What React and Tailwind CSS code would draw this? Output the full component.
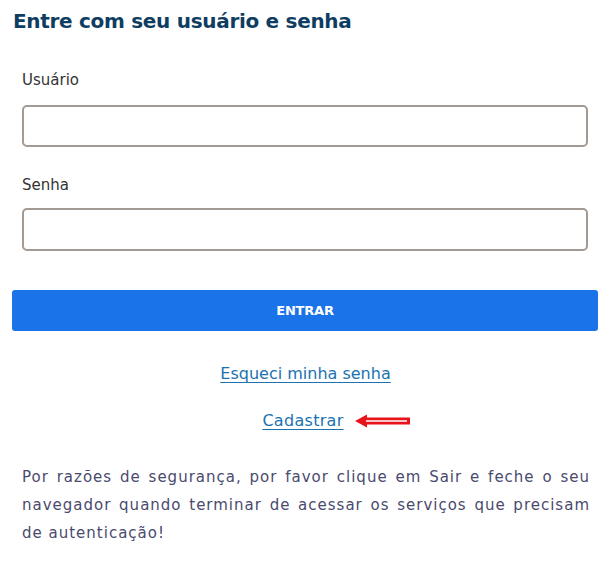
export default function App() {
  return (
    <div className="w-[604px] h-[565px] bg-white font-['DejaVu_Sans',sans-serif] relative">
      <div className="pt-[8px] pl-[13px] pr-[6px]">
        <h1 className="text-[20px] leading-[26px] font-bold text-[#0f3d62] tracking-[-0.3px]">
          Entre com seu usuário e senha
        </h1>

        <form className="mt-[36px]" onSubmit={(e) => e.preventDefault()}>
          <div className="pl-[9px] pr-[10px]">
            <label className="block text-[15px] leading-[20px] text-[#333]">Usuário</label>
            <input
              type="text"
              className="mt-[15px] block w-full h-[42px] rounded-[5px] border-2 border-[#a39b93] bg-white outline-none"
            />
            <label className="block mt-[28px] text-[15px] leading-[20px] text-[#333]">Senha</label>
            <input
              type="password"
              className="mt-[13px] block w-full h-[43px] rounded-[5px] border-2 border-[#a39b93] bg-white outline-none"
            />
          </div>

          <button
            type="submit"
            className="mt-[39px] w-[586px] -ml-[1px] h-[41px] rounded-[3px] bg-[#1a73e8] text-white text-[13px] font-bold tracking-[-0.2px]"
          >
            ENTRAR
          </button>
        </form>

        <div className="mt-[32px] flex flex-col items-center">
          <a href="#" className="text-[16px] leading-[22px] text-[#1b72b0] underline underline-offset-[3px]">
            Esqueci minha senha
          </a>
          <div className="mt-[25px] flex items-center gap-[10px] ml-[62px]">
            <a href="#" className="text-[16px] leading-[22px] tracking-[0.3px] text-[#1b72b0] underline underline-offset-[3px]">
              Cadastrar
            </a>
            <svg width="57" height="14" viewBox="0 0 57 14">
              <polygon points="1,7 13,0.5 13,3.5 56,3.5 56,10.5 13,10.5 13,13.5" fill="#e8141c" />
              <line x1="12" y1="7" x2="53" y2="7" stroke="#fff" strokeWidth="1.5" />
            </svg>
          </div>
        </div>

        <p className="mt-[31px] pl-[9px] pr-[8px] text-[15px] leading-[28px] tracking-[1px] text-[#4a4a6e] text-justify">
          Por razões de segurança, por favor clique em Sair e feche o seu navegador quando terminar de acessar os serviços que precisam de autenticação!
        </p>
      </div>
    </div>
  );
}
